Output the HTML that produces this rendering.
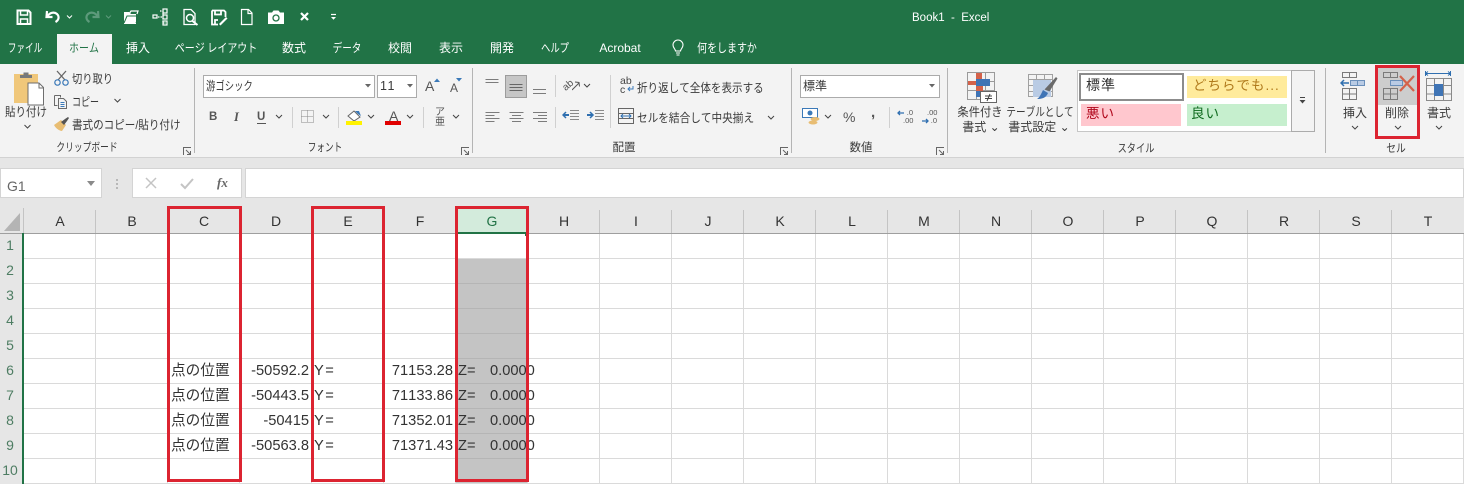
<!DOCTYPE html>
<html lang="ja"><head><meta charset="utf-8"><title>Book1 - Excel</title>
<style>
html,body{margin:0;padding:0}
body{width:1464px;height:484px;overflow:hidden;position:relative;background:#fff;font-family:"Liberation Sans","Noto Sans CJK JP",sans-serif;color:#333;font-kerning:none}
div,svg{position:absolute}
.t{position:absolute;white-space:nowrap;font-size:12px;line-height:16px;color:#3a3a3a}
.tab{color:#fff;font-size:12px;top:40px}
.tab,.c{transform:translateX(-50%) scaleX(var(--k,1));text-align:center}
.l{transform:scaleX(var(--k,1));transform-origin:0 50%}
.sep{width:1px;background:#b4b4b4;top:68px;height:85px}
.s2{width:1px;background:#d0d0d0}
.box{background:#fff;border:1px solid #ababab;box-sizing:border-box}
.cell{font-size:14.67px;line-height:20px;color:#333}
.r{transform:translateX(-100%)}
.hd{top:212px;font-size:14px;line-height:18px;color:#333;transform:translateX(-50%)}
.rn{left:-1px;width:22px;text-align:center;font-size:14px;line-height:18px;color:#4e7d63}
.red{border:3px solid #dc2431;box-sizing:border-box;background:none}
</style></head><body>

<div style="left:0;top:0;width:1464px;height:64px;background:#217346"></div>
<div style="left:57px;top:34px;width:55px;height:31px;background:#f3f3f3"></div>
<div style="left:0;top:64px;width:1464px;height:93px;background:#f3f3f3"></div>
<div style="left:0;top:157px;width:1464px;height:1px;background:#d2d2d2"></div>
<div style="left:0;top:158px;width:1464px;height:50px;background:#e6e6e6"></div>

<!-- QAT -->
<svg style="left:0;top:0" width="350" height="34" fill="none" stroke="#fff" stroke-width="1.600">
<path d="M17.500 10.500h11l2 2v11.500h-13z" stroke-width="2"/><path d="M20.500 10.500v4.500h7v-4.500M20.500 24v-5h7v5" stroke-width="1.500"/>
<path d="M47 11l-.5 6h6M47 16.500c3-4 7-5 10-2.500 2.500 2.500 2 6-1.500 8" stroke-width="2.200"/>
<path d="M67 15.500l2.500 2.500 2.500-2.500" stroke-width="1"/>
<g stroke="#5d9a7b"><path d="M98 11l.5 6h-6M98 16.500c-3-4-7-5-10-2.500-2.500 2.500-2 6 1.500 8" stroke-width="2.200"/><path d="M106 15.500l2.500 2.500 2.500-2.500" stroke-width="1"/></g>
<path d="M124 12h5l2 2h5v10h-12z" fill="#fff" stroke="none"/><path d="M129 14l2-3h7l-1 3" stroke-width="1.200"/><path d="M124 23l3-7h12l-3 7" stroke="#217346" stroke-width="1"/>
<g stroke-width="1.200"><rect x="153" y="15" width="4" height="3"/><rect x="163" y="9" width="4" height="4"/><rect x="163" y="15" width="4" height="4"/><rect x="163" y="21" width="4" height="4"/><path d="M158 17h5M160 11h3v12h3" stroke-dasharray="1.500 1"/></g>
<path d="M184 9.500h7l4 4v11h-11z" stroke-width="1.300"/><circle cx="190" cy="18" r="3.500" stroke-width="1.500"/><path d="M192.500 21l5 4" stroke-width="2"/>
<path d="M212 10.500h12l1.500 1.500v5M212 10.500v14h6M215 10.500v4h6v-4M215 24v-4h3" stroke-width="1.800"/><path d="M219 24l7-7 1.500 1.500-7 7z" fill="#fff" stroke="none"/>
<path d="M241.500 9.500h7l3.500 3.500v11.500h-10.500zM248 9.500v4h4" stroke-width="1.200"/>
<path d="M268 12.500h4l1.500-2h5l1.500 2h4v11.500h-16z" fill="#fff" stroke="none"/><circle cx="276" cy="18" r="3" stroke="#217346" stroke-width="1.300"/>
<path d="M301 13l7 7M308 13l-7 7" stroke-width="2.200"/>
<path d="M331 14.500h5" stroke-width="1.200"/><path d="M331 17l2.500 2.800 2.500-2.800z" fill="#fff" stroke="none"/>
</svg>
<div class="t" style="left:912px;top:10px;color:#fff;font-size:11.500px">Book1&nbsp; -&nbsp; Excel</div>

<!-- tabs -->
<div class="t tab" style="left:25px;--k:.72">ファイル</div>
<div class="t tab" style="left:84px;color:#217346;--k:.83">ホーム</div>
<div class="t tab" style="left:138px">挿入</div>
<div class="t tab" style="left:216px;--k:.83">ページ レイアウト</div>
<div class="t tab" style="left:294px">数式</div>
<div class="t tab" style="left:347px;--k:.8">データ</div>
<div class="t tab" style="left:400px">校閲</div>
<div class="t tab" style="left:451px">表示</div>
<div class="t tab" style="left:502px">開発</div>
<div class="t tab" style="left:555px;--k:.78">ヘルプ</div>
<div class="t tab" style="left:620px">Acrobat</div>
<svg style="left:670px;top:39px" width="16" height="18" fill="none" stroke="#fff" stroke-width="1.100"><path d="M5.500 12c0-2-2.500-3-2.500-6a5 5 0 0 1 10 0c0 3-2.500 4-2.500 6zM6 14h4M6.500 16h3"/></svg>
<div class="t tab" style="left:727px;--k:.83">何をしますか</div>

<!-- separators -->
<div class="sep" style="left:194px"></div>
<div class="sep" style="left:472px"></div>
<div class="sep" style="left:791px"></div>
<div class="sep" style="left:947px"></div>
<div class="sep" style="left:1325px"></div>

<!-- clipboard -->
<svg style="left:10px;top:68px" width="40" height="40" fill="none">
<rect x="4" y="6" width="24" height="29" fill="#f0c77a"/>
<path d="M10 10v-3h3.500v-2.500h5v2.500h3.500v3z" fill="#77797b"/>
<path d="M18 15h11l4.500 4.500v17.500h-15.500z" fill="#fff" stroke="#6e6e6e"/><path d="M29 15v5h4.500" stroke="#6e6e6e"/>
</svg>
<div class="t c" style="left:26px;top:104px;--k:.875">貼り付け</div>
<svg style="left:23px;top:124px" width="10" height="6" fill="none" stroke="#444"><path d="M1.500 1l3 3 3-3"/></svg>
<svg style="left:54px;top:70px" width="16" height="16" fill="none"><path d="M3 1l8 9M12 1l-8 9" stroke="#666" stroke-width="1.300"/><circle cx="3.500" cy="12.500" r="2.700" stroke="#3b79b8" stroke-width="1.200"/><circle cx="11.500" cy="12.500" r="2.700" stroke="#3b79b8" stroke-width="1.200"/></svg>
<div class="t l" style="left:72px;top:71px;--k:.855">切り取り</div>
<svg style="left:53px;top:94px" width="16" height="16" fill="none" stroke="#6a6a6a"><path d="M1.500 1.500h6v2M1.500 1.500v10h3"/><path d="M5.500 4.500h5l3 3v7h-8z"/><path d="M7.500 8.500h4M7.500 10.500h4M7.500 12.500h4" stroke="#3b79b8"/></svg>
<div class="t l" style="left:72px;top:94px;--k:.75">コピー</div>
<svg style="left:113px;top:98px" width="10" height="6" fill="none" stroke="#444"><path d="M1.500 1l3 3 3-3"/></svg>
<svg style="left:53px;top:116px" width="17" height="17"><path d="M1 9l7-5 5 5-4 6c-2 0-6-2-8-6z" fill="#e8bd73"/><path d="M8 6l4-3 3-2 1 1-2 3-3 4z" fill="#555"/></svg>
<div class="t l" style="left:72px;top:117px;--k:.88">書式のコピー/貼り付け</div>
<div class="t c" style="left:87px;top:140px;font-size:11.500px;--k:.76">クリップボード</div>
<svg style="left:183px;top:147px" width="9" height="9" fill="none" stroke="#666"><path d="M.5 8V.5H8M3 3l4.500 4.500M7.500 4v3.500H4"/></svg>

<!-- font -->
<div class="box" style="left:203px;top:75px;width:172px;height:23px"></div>
<div class="t l" style="left:206px;top:78px;font-size:12px;--k:.78">游ゴシック</div>
<svg style="left:365px;top:84px" width="7" height="5"><path d="M0 0h6l-3 3.500z" fill="#666"/></svg>
<div class="box" style="left:377px;top:75px;width:40px;height:23px"></div>
<div class="t" style="left:380px;top:78px;font-size:12.500px;letter-spacing:.5px">11</div>
<svg style="left:407px;top:84px" width="7" height="5"><path d="M0 0h6l-3 3.500z" fill="#666"/></svg>
<div class="t" style="left:425px;top:78px;font-size:14px;color:#555">A</div>
<svg style="left:434px;top:78px" width="8" height="5"><path d="M0 4l3-3.500 3 3.500z" fill="#3b79b8"/></svg>
<div class="t" style="left:450px;top:80px;font-size:12px;color:#555">A</div>
<svg style="left:456px;top:78px" width="8" height="5"><path d="M0 0h6l-3 3.500z" fill="#3b79b8"/></svg>
<div class="t" style="left:209px;top:109px;font-weight:bold;font-size:11.500px;color:#555">B</div>
<div class="t" style="left:234px;top:109px;font-style:italic;font-family:'Liberation Serif',serif;font-size:12.500px;color:#555;font-weight:bold">I</div>
<div class="t" style="left:257px;top:109px;font-weight:bold;font-size:11.500px;color:#555">U</div>
<div style="left:257px;top:123px;width:9px;height:1px;background:#555"></div>
<svg style="left:275px;top:114px" width="9" height="6" fill="none" stroke="#444"><path d="M1 1l3 3 3-3"/></svg>
<div class="s2" style="left:292px;top:107px;height:21px"></div>
<svg style="left:301px;top:110px" width="14" height="14" fill="none" stroke="#888" stroke-dasharray="1 1"><path d="M.5.500h12v12h-12zM6.500.500v12M.5 6.500h12"/></svg>
<svg style="left:322px;top:114px" width="9" height="6" fill="none" stroke="#444"><path d="M1 1l3 3 3-3"/></svg>
<div class="s2" style="left:338px;top:107px;height:21px"></div>
<svg style="left:345px;top:109px" width="20" height="17"><path d="M3 7l6-5 6 6-6 4z" fill="#fff" stroke="#666"/><path d="M10 2h4l2 5-3-2z" fill="#3b79b8"/><rect x="1" y="12" width="16" height="4" fill="#fff200"/></svg>
<svg style="left:367px;top:114px" width="9" height="6" fill="none" stroke="#444"><path d="M1 1l3 3 3-3"/></svg>
<div class="t" style="left:389px;top:108px;font-size:14px;color:#555">A</div>
<div style="left:385px;top:121px;width:16px;height:4px;background:#e00000"></div>
<svg style="left:406px;top:114px" width="9" height="6" fill="none" stroke="#444"><path d="M1 1l3 3 3-3"/></svg>
<div class="s2" style="left:423px;top:107px;height:21px"></div>
<div class="t" style="left:435px;top:108px;font-size:10px;line-height:10px;width:10px;white-space:normal;color:#555">ア亜</div>
<svg style="left:452px;top:114px" width="9" height="6" fill="none" stroke="#444"><path d="M1 1l3 3 3-3"/></svg>
<div class="t c" style="left:325px;top:140px;font-size:11.500px;--k:.75">フォント</div>
<svg style="left:461px;top:147px" width="9" height="9" fill="none" stroke="#666"><path d="M.5 8V.5H8M3 3l4.500 4.500M7.500 4v3.500H4"/></svg>

<!-- align -->
<div style="left:505px;top:75px;width:22px;height:23px;background:#c6c6c6;border:1px solid #9c9c9c;box-sizing:border-box"></div>
<svg style="left:480px;top:70px" width="80" height="66" fill="none" stroke="#7c7c7c">
<path d="M5.500 9.500h13M5.500 12.500h13"/>
<path d="M29.500 14.500h13M29.500 17.500h13M29.500 20.500h13" stroke="#666"/>
<path d="M53 19.500h13M53 23.500h13"/>
<path d="M5.500 42.500h14M5.500 45.500h9M5.500 48.500h14M5.500 51.500h9"/>
<path d="M29.500 42.500h14M32 45.500h9M29.500 48.500h14M32 51.500h9"/>
<path d="M53 42.500h14M58 45.500h9M53 48.500h14M58 51.500h9"/>
</svg>
<div class="s2" style="left:555px;top:75px;height:22px"></div>
<div class="s2" style="left:555px;top:107px;height:21px"></div>
<div class="t" style="left:563px;top:78px;font-size:10px;transform:rotate(-40deg);color:#555">ab</div>
<svg style="left:572px;top:79px" width="9" height="12" fill="none" stroke="#555"><path d="M0 11l7-7M3 3l4 .5.500 4"/></svg>
<svg style="left:583px;top:83px" width="9" height="6" fill="none" stroke="#444"><path d="M1 1l3 3 3-3"/></svg>
<svg style="left:562px;top:108px" width="46" height="16" fill="none" stroke="#8a8a8a">
<path d="M8 2.500h9M8 5.500h9M8 8.500h9M8 11.500h9"/><path d="M1 7h6" stroke="#2f6fb0" stroke-width="2"/><path d="M4 4l-3 3 3 3" stroke="#2f6fb0" stroke-width="1.500"/>
<path d="M33 2.500h9M33 5.500h9M33 8.500h9M33 11.500h9"/><path d="M25 7h6" stroke="#2f6fb0" stroke-width="2"/><path d="M28 4l3 3-3 3" stroke="#2f6fb0" stroke-width="1.500"/>
</svg>
<div class="s2" style="left:610px;top:75px;height:53px"></div>
<div class="t" style="left:620px;top:77px;font-size:10.500px;line-height:9px;color:#444;white-space:normal;width:15px">ab<br>c</div>
<svg style="left:627px;top:86px" width="7" height="6" fill="none" stroke="#3b79b8"><path d="M6 0v3H1M3 1L1 3l2 2"/></svg>
<div class="t l" style="left:637px;top:80px;--k:.88">折り返して全体を表示する</div>
<svg style="left:618px;top:108px" width="17" height="17" fill="none" stroke="#666"><path d="M.5.500h15v15h-15zM.5 5.500h15M.5 10.500h15"/><path d="M3 8h10M5 6l-2 2 2 2M11 6l2 2-2 2" stroke="#2f6fb0"/></svg>
<div class="t l" style="left:637px;top:110px;--k:.887">セルを結合して中央揃え</div>
<svg style="left:767px;top:115px" width="9" height="6" fill="none" stroke="#444"><path d="M1 1l3 3 3-3"/></svg>
<div class="t c" style="left:624px;top:140px;font-size:11.500px">配置</div>
<svg style="left:780px;top:147px" width="9" height="9" fill="none" stroke="#666"><path d="M.5 8V.5H8M3 3l4.500 4.500M7.500 4v3.500H4"/></svg>

<!-- number -->
<div class="box" style="left:800px;top:75px;width:140px;height:23px"></div>
<div class="t" style="left:803px;top:78px">標準</div>
<svg style="left:929px;top:84px" width="7" height="5"><path d="M0 0h6l-3 3.500z" fill="#666"/></svg>
<svg style="left:802px;top:108px" width="19" height="18"><rect x=".5" y=".5" width="15" height="9" fill="#fff" stroke="#3b79b8"/><circle cx="8" cy="5" r="2.500" fill="#3b79b8"/><ellipse cx="13" cy="11" rx="4.500" ry="2" fill="#e8bd73"/><ellipse cx="11" cy="14.500" rx="4.500" ry="2" fill="#e8bd73"/></svg>
<svg style="left:824px;top:114px" width="9" height="6" fill="none" stroke="#444"><path d="M1 1l3 3 3-3"/></svg>
<div class="t" style="left:843px;top:109px;font-size:14px;color:#555">%</div>
<div class="t" style="left:871px;top:105px;font-size:15px;font-weight:bold;color:#555">,</div>
<div class="s2" style="left:889px;top:107px;height:21px"></div>
<div class="t" style="left:903px;top:109px;font-size:7.500px;line-height:8px;color:#555;text-align:right;width:10px">.0<br>.00</div>
<svg style="left:897px;top:110px" width="8" height="6" fill="none" stroke="#2f6fb0" stroke-width="1.300"><path d="M7 3H1M3 1L1 3l2 2"/></svg>
<div class="t" style="left:927px;top:109px;font-size:7.500px;line-height:8px;color:#555;text-align:right;width:10px">.00<br>.0</div>
<svg style="left:921px;top:118px" width="8" height="6" fill="none" stroke="#2f6fb0" stroke-width="1.300"><path d="M1 3h6M5 1l2 2-2 2"/></svg>
<div class="t c" style="left:861px;top:140px;font-size:11.500px">数値</div>
<svg style="left:936px;top:147px" width="9" height="9" fill="none" stroke="#666"><path d="M.5 8V.5H8M3 3l4.500 4.500M7.500 4v3.500H4"/></svg>

<!-- styles -->
<svg style="left:966px;top:71px" width="32" height="36" fill="none">
<path d="M1.500 1.500h27v27h-27zM10.500 1.500v27M19.500 1.500v27M1.500 10.500h27M1.500 19.500h27" stroke="#9a9a9a"/>
<rect x="10" y="2" width="6" height="6" fill="#d4624a"/><rect x="2" y="10" width="8" height="4" fill="#d4624a"/><rect x="10" y="8" width="14" height="7" fill="#3f74b5"/><rect x="10" y="15" width="7" height="5" fill="#d4624a"/><rect x="10" y="20" width="5" height="6" fill="#3f74b5"/>
<rect x="14.500" y="20.500" width="16" height="11" fill="#fff" stroke="#666"/><path d="M19 25h7M19 27.500h7M24 23l-3 7" stroke="#444"/>
</svg>
<svg style="left:1027px;top:73px" width="32" height="34" fill="none">
<path d="M1.500 1.500h24v22h-24zM9.500 1.500v22M17.500 1.500v22M1.500 6.500h24M1.500 12.500h24M1.500 18.500h24" stroke="#a0a0a0"/>
<rect x="6" y="7" width="18" height="17" fill="#b9cbe4"/>
<path d="M29 4l1.500 1.500-8 13-5-2z" fill="#6a6a6a"/><path d="M16 17l5 3c-2 5-6 6-11 6 3-2 4-5 6-9z" fill="#3f74b5"/>
</svg>
<div class="t c" style="left:980px;top:104px;--k:.94">条件付き</div>
<div class="t c" style="left:981px;top:119px">書式 ⌄</div>
<div class="t c" style="left:1040px;top:104px;--k:.8">テーブルとして</div>
<div class="t c" style="left:1039px;top:119px">書式設定 ⌄</div>
<div style="left:1077px;top:70px;width:215px;height:62px;background:#fff;border:1px solid #c6c6c6;box-sizing:border-box"></div>
<div style="left:1079px;top:73px;width:105px;height:28px;background:#fff;border:2px solid #8c8c8c;box-sizing:border-box"></div>
<div class="t" style="left:1086px;top:77px;font-size:14px;letter-spacing:1px;color:#333">標準</div>
<div style="left:1187px;top:76px;width:100px;height:22px;background:#ffeb9c"></div>
<div class="t" style="left:1193px;top:78px;font-size:13.500px;letter-spacing:1px;color:#b07a1c">どちらでも...</div>
<div style="left:1081px;top:104px;width:100px;height:22px;background:#ffc7ce"></div>
<div class="t" style="left:1086px;top:106px;font-size:13.500px;letter-spacing:1px;color:#b0061a">悪い</div>
<div style="left:1187px;top:104px;width:100px;height:22px;background:#c6efce"></div>
<div class="t" style="left:1191px;top:106px;font-size:13.500px;letter-spacing:1px;color:#0f6a1e">良い</div>
<div style="left:1291px;top:70px;width:24px;height:62px;background:#f3f3f3;border:1px solid #ababab;box-sizing:border-box"></div>
<svg style="left:1299px;top:97px" width="8" height="8"><path d="M1 .5h5" stroke="#444"/><path d="M.5 3h6l-3 3.500z" fill="#444"/></svg>
<div class="t c" style="left:1136px;top:141px;font-size:11.500px;--k:.8">スタイル</div>

<!-- cells -->
<div style="left:1378px;top:68px;width:39px;height:37px;background:#cdcdcd"></div>
<svg style="left:1340px;top:70px" width="34" height="36" fill="none" stroke="#7a7a7a">
<path d="M2.500 2.500h14v5h-14zM9.500 2.500v5M2.500 18.500h14v11h-14zM9.500 18.500v11M2.500 24h14"/>
<rect x="10.500" y="10.500" width="14" height="5" fill="#b9cbe4" stroke="#6a8fba"/><path d="M17.500 10.500v5" stroke="#6a8fba"/>
<path d="M1 13h8M4 10l-3 3 3 3" stroke="#2f6fb0" stroke-width="1.500"/>
</svg>
<div class="t c" style="left:1355px;top:105px">挿入</div>
<svg style="left:1351px;top:125px" width="9" height="6" fill="none" stroke="#444"><path d="M1 1l3 3 3-3"/></svg>
<svg style="left:1380px;top:70px" width="36" height="36" fill="none" stroke="#7a7a7a">
<path d="M3.500 2.500h14v5h-14zM10.500 2.500v5M3.500 18.500h14v11h-14zM10.500 18.500v11M3.500 24h14"/>
<rect x="10.500" y="10.500" width="12" height="5" fill="#b9cbe4" stroke="#6a8fba"/>
<path d="M20 6l14 15M34 6L20 21" stroke="#d4624a" stroke-width="2.200"/>
</svg>
<div class="t c" style="left:1397px;top:105px">削除</div>
<svg style="left:1394px;top:125px" width="9" height="6" fill="none" stroke="#444"><path d="M1 1l3 3 3-3"/></svg>
<svg style="left:1424px;top:70px" width="32" height="36" fill="none" stroke="#8a8a8a">
<path d="M1 3.500h26" stroke="#2f6fb0"/><path d="M1.500 1v5M26.500 1v5M4 1.500L1.500 3.500 4 5.500M24 1.500l2.500 2-2.500 2" stroke="#2f6fb0"/>
<path d="M2.500 8.500h25v22h-25zM10.500 8.500v22M19.500 8.500v22M2.500 15.500h25M2.500 24h25"/>
<rect x="10" y="14" width="9" height="12" fill="#3f74b5" stroke="none"/>
</svg>
<div class="t c" style="left:1439px;top:105px">書式</div>
<svg style="left:1435px;top:125px" width="9" height="6" fill="none" stroke="#444"><path d="M1 1l3 3 3-3"/></svg>
<div class="t c" style="left:1396px;top:141px;font-size:11.500px;--k:.85">セル</div>

<!-- formula bar -->
<div style="left:0;top:168px;width:102px;height:30px;background:#fff;border:1px solid #d4d4d4;box-sizing:border-box"></div>
<div class="t" style="left:7px;top:177px;font-size:14px;line-height:18px;color:#666">G1</div>
<svg style="left:87px;top:181px" width="10" height="6"><path d="M0 0h8l-4 5z" fill="#8a8a8a"/></svg>
<svg style="left:116px;top:178px" width="3" height="12"><path d="M1 1v2M1 5v2M1 9v2" stroke="#a8a8a8" stroke-width="1.500"/></svg>
<div style="left:132px;top:168px;width:110px;height:30px;background:#fff;border:1px solid #d4d4d4;box-sizing:border-box"></div>
<svg style="left:144px;top:176px" width="56" height="16" fill="none"><path d="M2 2l10 10M12 2L2 12" stroke="#c4c4c4" stroke-width="1.500"/><path d="M37 8l4 4 8-9" stroke="#c4c4c4" stroke-width="2"/></svg>
<div class="t" style="left:217px;top:175px;font-family:'Liberation Serif',serif;font-style:italic;font-weight:bold;font-size:13px;color:#666">fx</div>
<div style="left:245px;top:168px;width:1219px;height:30px;background:#fff;border:1px solid #d4d4d4;box-sizing:border-box"></div>

<!-- sheet -->
<div style="left:0;top:208px;width:1464px;height:25px;background:#e6e6e6"></div>
<div style="left:0;top:233px;width:23px;height:251px;background:#e6e6e6"></div>
<div style="left:24px;top:234px;width:1440px;height:250px;background-color:#fff;background-image:repeating-linear-gradient(90deg,transparent 0 71px,#dadada 71px 72px),repeating-linear-gradient(180deg,transparent 0 24px,#dadada 24px 25px)"></div>
<div style="left:456px;top:259px;width:71px;height:224px;background-image:repeating-linear-gradient(180deg,#c4c4c4 0 24px,#b5b5b5 24px 25px)"></div>
<div style="left:0;top:233px;width:1464px;height:1px;background:#9f9f9f"></div>
<div style="left:23px;top:208px;width:1px;height:25px;background:#c4c4c4"></div>
<div style="left:95px;top:210px;width:1px;height:23px;background:#c4c4c4;box-shadow:72px 0 #c4c4c4,144px 0 #c4c4c4,216px 0 #c4c4c4,288px 0 #c4c4c4,360px 0 #c4c4c4,432px 0 #c4c4c4,504px 0 #c4c4c4,576px 0 #c4c4c4,648px 0 #c4c4c4,720px 0 #c4c4c4,792px 0 #c4c4c4,864px 0 #c4c4c4,936px 0 #c4c4c4,1008px 0 #c4c4c4,1080px 0 #c4c4c4,1152px 0 #c4c4c4,1224px 0 #c4c4c4,1296px 0 #c4c4c4"></div>
<svg style="left:3px;top:212px" width="18" height="20"><path d="M17 1v18H1z" fill="#b4b4b4"/></svg>
<div style="left:456px;top:208px;width:72px;height:25px;background:#d3ebdc"></div>
<div style="left:456px;top:232px;width:72px;height:2px;background:#217346"></div>
<div style="left:525px;top:232px;width:3px;height:4px;background:#217346"></div>
<div style="left:22px;top:233px;width:2px;height:251px;background:#217346"></div>

<div class="t hd" style="left:60px">A</div><div class="t hd" style="left:132px">B</div><div class="t hd" style="left:204px">C</div><div class="t hd" style="left:276px">D</div><div class="t hd" style="left:348px">E</div><div class="t hd" style="left:420px">F</div><div class="t hd" style="left:492px;color:#217346">G</div><div class="t hd" style="left:564px">H</div><div class="t hd" style="left:636px">I</div><div class="t hd" style="left:708px">J</div><div class="t hd" style="left:780px">K</div><div class="t hd" style="left:852px">L</div><div class="t hd" style="left:924px">M</div><div class="t hd" style="left:996px">N</div><div class="t hd" style="left:1068px">O</div><div class="t hd" style="left:1140px">P</div><div class="t hd" style="left:1212px">Q</div><div class="t hd" style="left:1284px">R</div><div class="t hd" style="left:1356px">S</div><div class="t hd" style="left:1428px">T</div>

<div class="t rn" style="top:236px">1</div><div class="t rn" style="top:261px">2</div><div class="t rn" style="top:286px">3</div><div class="t rn" style="top:311px">4</div><div class="t rn" style="top:336px">5</div><div class="t rn" style="top:361px">6</div><div class="t rn" style="top:386px">7</div><div class="t rn" style="top:411px">8</div><div class="t rn" style="top:436px">9</div><div class="t rn" style="top:461px">10</div>

<div class="t cell" style="left:171px;top:361px">点の位置</div><div class="t cell r" style="left:309px;top:361px">-50592.2</div><div class="t cell" style="left:314px;top:361px;letter-spacing:1.500px">Y=</div><div class="t cell r" style="left:453px;top:361px">71153.28</div><div class="t cell" style="left:458px;top:361px">Z=</div><div class="t cell" style="left:490px;top:361px">0.0000</div>
<div class="t cell" style="left:171px;top:386px">点の位置</div><div class="t cell r" style="left:309px;top:386px">-50443.5</div><div class="t cell" style="left:314px;top:386px;letter-spacing:1.500px">Y=</div><div class="t cell r" style="left:453px;top:386px">71133.86</div><div class="t cell" style="left:458px;top:386px">Z=</div><div class="t cell" style="left:490px;top:386px">0.0000</div>
<div class="t cell" style="left:171px;top:411px">点の位置</div><div class="t cell r" style="left:309px;top:411px">-50415</div><div class="t cell" style="left:314px;top:411px;letter-spacing:1.500px">Y=</div><div class="t cell r" style="left:453px;top:411px">71352.01</div><div class="t cell" style="left:458px;top:411px">Z=</div><div class="t cell" style="left:490px;top:411px">0.0000</div>
<div class="t cell" style="left:171px;top:436px">点の位置</div><div class="t cell r" style="left:309px;top:436px">-50563.8</div><div class="t cell" style="left:314px;top:436px;letter-spacing:1.500px">Y=</div><div class="t cell r" style="left:453px;top:436px">71371.43</div><div class="t cell" style="left:458px;top:436px">Z=</div><div class="t cell" style="left:490px;top:436px">0.0000</div>

<!-- red boxes -->
<div class="red" style="left:167px;top:206px;width:75px;height:276px"></div>
<div class="red" style="left:311px;top:206px;width:74px;height:276px"></div>
<div class="red" style="left:455px;top:206px;width:74px;height:276px"></div>
<div class="red" style="left:1375px;top:65px;width:45px;height:74px"></div>
</body></html>
